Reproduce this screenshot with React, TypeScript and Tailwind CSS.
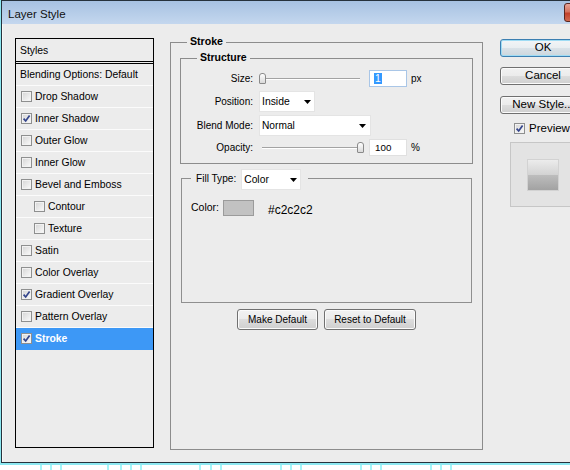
import React from "react";

// Photoshop "Layer Style" dialog, Stroke page

const STYLES = [
  { label: "Drop Shadow", checked: false },
  { label: "Inner Shadow", checked: true },
  { label: "Outer Glow", checked: false },
  { label: "Inner Glow", checked: false },
  { label: "Bevel and Emboss", checked: false },
  { label: "Contour", checked: false, sub: true },
  { label: "Texture", checked: false, sub: true },
  { label: "Satin", checked: false },
  { label: "Color Overlay", checked: false },
  { label: "Gradient Overlay", checked: true },
  { label: "Pattern Overlay", checked: false },
  { label: "Stroke", checked: true, active: true },
];

const TICKS = [40, 50, 60, 107, 120, 130, 140, 199, 210, 220, 280, 290, 300, 360, 370, 380, 430, 440, 450];

function CheckBox({ checked }: { checked: boolean }) {
  return (
    <span className="flex items-center justify-center w-[11px] h-[11px] shrink-0 border border-[#8e8f8f] bg-[linear-gradient(135deg,#d4d4d4,#fbfbfb)] shadow-[inset_0_0_0_1px_#f2f2f2]">
      {checked && (
        <svg viewBox="0 0 9 9" className="w-[9px] h-[9px]">
          <path d="M1.6 4.6 L3.7 7 L7.6 1.6" fill="none" stroke="#34458c" strokeWidth="1.7" />
        </svg>
      )}
    </span>
  );
}

function Arrow() {
  return (
    <svg viewBox="0 0 7 4" className="w-[7px] h-[4px]">
      <path d="M0 0H7L3.5 4Z" fill="#000" />
    </svg>
  );
}

function Slider({ atEnd }: { atEnd?: boolean }) {
  return (
    <div className="relative w-[106px] h-[17px] shrink-0">
      <div className="absolute left-[3px] right-[5px] top-[8px] h-[2px] border-t border-[#a3a3a3] border-b border-b-white" />
      <div
        className={`absolute top-[3px] w-[7px] h-[11px] rounded-t-[3px] rounded-b-[1px] border border-[#8a8a8a] bg-[linear-gradient(#ffffff,#d9d9d9)] ${
          atEnd ? "left-[98px]" : "left-0"
        }`}
      />
    </div>
  );
}

function WinButton({ children, className }: { children: React.ReactNode; className: string }) {
  return (
    <div
      className={`flex items-center justify-center rounded-[3px] border border-[#707070] bg-[linear-gradient(#f2f2f2,#ebebeb_50%,#dddddd_50%,#cfcfcf)] shadow-[inset_0_0_0_1px_#fbfbfb] ${className}`}
    >
      {children}
    </div>
  );
}

export default function App() {
  return (
    <div className="w-[570px] h-[470px] overflow-hidden bg-white font-['Liberation_Sans',Arial,sans-serif] text-black">
      <div className="w-[620px] pl-px pb-[2px] bg-[#8ce8f1]">
        <div className="border-l border-t border-b border-[#26323c]">
          {/* title bar */}
          <div className="flex h-[23px] bg-[linear-gradient(#a7c2e2,#c4d7ee)]">
            <div className="w-[562px] shrink-0 pl-[6px] pt-[6px] text-[11.5px] leading-[14px] text-[#111]">Layer Style</div>
            <div className="mt-[2px] w-[43px] h-[19px] shrink-0 rounded-[3px] border border-[#5a2721] bg-[linear-gradient(#e8a597,#d4735f_45%,#c2412b_55%,#d0694f)]" />
          </div>

          {/* body */}
          <div className="flex items-start h-[438px] bg-[#ececec] border-l border-[#f8f8f8] pl-[12px]">
            {/* styles list */}
            <div className="mt-[14px] w-[139px] h-[410px] shrink-0 border border-black text-[10.4px] leading-[13px]">
              <div className="h-[23px] border-b border-black flex items-center pl-[4px]">Styles</div>
              <div className="h-[2px] border-b border-black" />
              <div className="h-[22px] border-b border-[#fbfbfb] flex items-center pl-[4px]">Blending Options: Default</div>
              {STYLES.map((s) => (
                <div
                  key={s.label}
                  className={`h-[22px] border-b flex items-center gap-[3px] ${s.sub ? "pl-[18px]" : "pl-[5px]"} ${
                    s.active ? "bg-[#3d98f6] border-[#3d98f6] text-white font-bold" : "border-[#fbfbfb]"
                  }`}
                >
                  <CheckBox checked={s.checked} />
                  <span>{s.label}</span>
                </div>
              ))}
            </div>

            {/* Stroke group */}
            <div className="relative mt-[18px] ml-[16px] w-[313px] h-[408px] shrink-0 border border-[#8c8c8c]">
              <span className="absolute top-[-8px] left-[16px] px-[3px] bg-[#ececec] text-[10.6px] leading-[13px] font-bold">Stroke</span>

              {/* Structure */}
              <div className="relative mt-[15px] ml-[9px] w-[293px] h-[106px] border border-[#8c8c8c] text-[10px] leading-[13px]">
                <span className="absolute top-[-8px] left-[16px] px-[3px] bg-[#ececec] text-[10.5px] leading-[13px] font-bold">Structure</span>

                <div className="mt-[11px] flex items-center h-[17px] gap-[6px]">
                  <span className="w-[72px] text-right">Size:</span>
                  <div className="flex items-center">
                    <Slider />
                    <div className="ml-[4px] w-[38px] h-[17px] border border-[#a9c6e7] bg-white flex items-center pl-[4px]">
                      <span className="bg-[#3399ff] text-white text-[10.4px] leading-[11px] px-px">1</span>
                    </div>
                    <span className="ml-[4px] text-[10px]">px</span>
                  </div>
                </div>

                <div className="mt-[4px] flex items-center h-[21px] gap-[6px]">
                  <span className="w-[72px] text-right">Position:</span>
                  <div className="w-[56px] h-[21px] bg-white border border-[#e4e4e4] flex items-center justify-between pl-[2px] pr-[3px] text-[10.4px]">
                    <span>Inside</span>
                    <Arrow />
                  </div>
                </div>

                <div className="mt-[3px] flex items-center h-[21px] gap-[6px]">
                  <span className="w-[72px] text-right">Blend Mode:</span>
                  <div className="w-[112px] h-[21px] bg-white border border-[#e4e4e4] flex items-center justify-between pl-[2px] pr-[4px] text-[10.2px]">
                    <span>Normal</span>
                    <Arrow />
                  </div>
                </div>

                <div className="mt-[3px] flex items-center h-[17px] gap-[6px]">
                  <span className="w-[72px] text-right">Opacity:</span>
                  <div className="flex items-center">
                    <Slider atEnd />
                    <div className="ml-[4px] w-[38px] h-[17px] border border-[#e0e0e0] bg-white flex items-center pl-[5px] text-[9.8px]">100</div>
                    <span className="ml-[4px] text-[10px]">%</span>
                  </div>
                </div>
              </div>

              {/* Fill Type */}
              <div className="relative mt-[14px] ml-[10px] w-[291px] h-[125px] border border-[#8f8f8f]">
                <div className="absolute top-[-10px] left-[9px] h-[21px] flex items-center gap-[5px] bg-[#ececec] pl-[5px] pr-[7px]">
                  <span className="text-[10.1px] leading-[13px] -mt-[2px]">Fill Type:</span>
                  <div className="w-[60px] h-[21px] bg-white border border-[#e4e4e4] flex items-center justify-between pl-[2px] pr-[3px] text-[10.3px]">
                    <span>Color</span>
                    <Arrow />
                  </div>
                </div>

                <div className="mt-[21px] pl-[9px] flex items-start">
                  <span className="w-[32px] mt-px text-[10.5px] leading-[13px]">Color:</span>
                  <div className="w-[31px] h-[16px] bg-[#c2c2c2] border border-[#9b9b9b]" />
                  <span className="ml-[14px] mt-[3px] text-[12px] leading-[14px]">#c2c2c2</span>
                </div>
              </div>

              <div className="mt-[6px] flex justify-center gap-[6px] text-[10px]">
                <WinButton className="w-[81px] h-[21px]">Make Default</WinButton>
                <WinButton className="w-[92px] h-[21px]">Reset to Default</WinButton>
              </div>
            </div>

            {/* right column */}
            <div className="mt-[15px] ml-[17px] w-[86px] shrink-0 flex flex-col text-[11.5px]">
              <div className="h-[18px] flex items-center justify-center rounded-[3px] border border-[#3c7fb1] bg-[linear-gradient(#f2f5f7,#e9eef1_50%,#dae2e8_50%,#ccd6dd)] shadow-[inset_0_0_0_1px_#9fdcf4]">
                OK
              </div>
              <WinButton className="mt-[10px] h-[18px]">Cancel</WinButton>
              <WinButton className="mt-[11px] h-[18px] whitespace-nowrap">New Style...</WinButton>

              <div className="mt-[9px] ml-[14px] flex items-center gap-[4px] h-[11px] whitespace-nowrap">
                <CheckBox checked />
                <span>Preview</span>
              </div>

              <div className="mt-[8px] ml-[10px] w-[70px] h-[65px] border border-[#c6c6c6] bg-[#e3e3e3] pl-[16px] pt-[16px]">
                <div className="w-[32px] h-[32px] border border-[#d2d2d2] bg-[linear-gradient(#ececec,#d2d2d2_50%,#bdbdbd_50%,#a2a2a2)]" />
              </div>
            </div>
          </div>
        </div>
      </div>

      {/* ruler ticks behind the dialog */}
      <svg width="570" height="5" className="block">
        {TICKS.map((x) => (
          <rect key={x} x={x} y={0} width={2} height={5} fill="#a4f5f9" />
        ))}
      </svg>
    </div>
  );
}
